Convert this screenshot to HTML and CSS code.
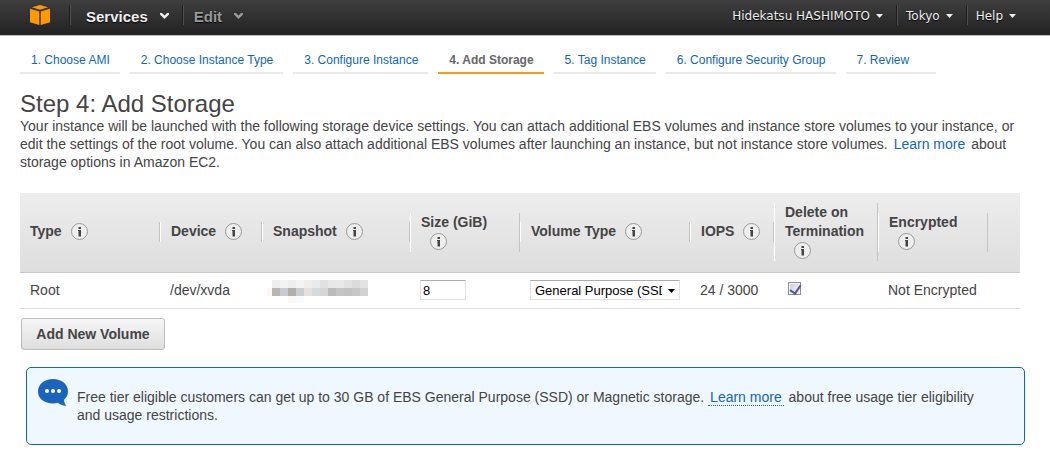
FILE: index.html
```html
<!DOCTYPE html>
<html lang="en">
<head>
    <meta charset="UTF-8">
    <meta name="viewport" content="width=device-width, initial-scale=1.0">
    <title>Step 4: Add Storage</title>
    <link rel="stylesheet" href="styles.css">
</head>
<body>

<!-- Info icon, reused by every column header -->
<svg class="sprite" aria-hidden="true">
    <symbol id="info" viewBox="0 0 17 17">
        <circle cx="8.5" cy="8.5" r="8" fill="#eeeeee" stroke="#999999"/>
        <path d="M7.500 4H10v2H7.500zM7 7h3v6.500H7.500V8H7z" fill="#444444"/>
    </symbol>
</svg>

<header class="topbar">
    <a href="#" class="logo" aria-label="Home">
        <svg width="20" height="20" viewBox="0 0 20 20">
            <path d="M2 2.300 10 0l8 2.300L10 4.800zM0 3.800l9.300 2.700V20L0 17.200zM20 3.800l-9.300 2.700V20L20 17.200z" fill="#ff9900"/>
        </svg>
    </a>
    <nav class="menu">
        <button class="menu-item">Services
            <svg width="9" height="6" viewBox="0 0 9 6"><path d="M0 0h2l2.500 2.500L7 0h2v1.500L4.500 6 0 1.500z" fill="currentColor"/></svg>
        </button>
        <button class="menu-item muted">Edit
            <svg width="9" height="6" viewBox="0 0 9 6"><path d="M0 0h2l2.500 2.500L7 0h2v1.500L4.500 6 0 1.500z" fill="currentColor"/></svg>
        </button>
    </nav>
    <nav class="account">
        <button class="account-item">Hidekatsu HASHIMOTO
            <svg width="7" height="4" viewBox="0 0 7 4"><path d="M0 0h7L3.500 4z" fill="currentColor"/></svg>
        </button>
        <button class="account-item">Tokyo
            <svg width="7" height="4" viewBox="0 0 7 4"><path d="M0 0h7L3.500 4z" fill="currentColor"/></svg>
        </button>
        <button class="account-item">Help
            <svg width="7" height="4" viewBox="0 0 7 4"><path d="M0 0h7L3.500 4z" fill="currentColor"/></svg>
        </button>
    </nav>
</header>

<nav class="steps">
    <a href="#">1. Choose AMI</a>
    <a href="#">2. Choose Instance Type</a>
    <a href="#">3. Configure Instance</a>
    <a href="#" class="active">4. Add Storage</a>
    <a href="#">5. Tag Instance</a>
    <a href="#">6. Configure Security Group</a>
    <a href="#">7. Review</a>
</nav>

<main>
    <h1>Step 4: Add Storage</h1>
    <p class="intro">Your instance will be launched with the following storage device settings. You can attach additional EBS volumes and instance store volumes to your instance, or edit the settings of the root volume. You can also attach additional EBS volumes after launching an instance, but not instance store volumes. <a href="#">Learn more</a> about storage options in Amazon EC2.</p>

    <table class="volumes">
        <colgroup>
            <col class="col-type">
            <col class="col-device">
            <col class="col-snapshot">
            <col class="col-size">
            <col class="col-volume">
            <col class="col-iops">
            <col class="col-delete">
            <col class="col-encrypted">
            <col>
        </colgroup>
        <thead>
            <tr>
                <th><div class="head">Type<svg class="info"><use href="#info"/></svg></div></th>
                <th><div class="head">Device<svg class="info"><use href="#info"/></svg></div></th>
                <th><div class="head">Snapshot<svg class="info"><use href="#info"/></svg></div></th>
                <th><div class="head" id="sizeLabel">Size (GiB)<svg class="info"><use href="#info"/></svg></div></th>
                <th><div class="head" id="volumeLabel">Volume Type<svg class="info"><use href="#info"/></svg></div></th>
                <th><div class="head">IOPS<svg class="info"><use href="#info"/></svg></div></th>
                <th><div class="head" id="deleteLabel">Delete on Termination<svg class="info"><use href="#info"/></svg></div></th>
                <th><div class="head">Encrypted<svg class="info"><use href="#info"/></svg></div></th>
                <th></th>
            </tr>
        </thead>
        <tbody>
            <tr>
                <td>Root</td>
                <td>/dev/xvda</td>
                <td>
                    <!-- snapshot id is masked -->
                    <svg class="mask" width="96" height="20" shape-rendering="crispEdges">
                        <rect x="0" width="8" height="8" fill="#f0eeed"/>
                        <rect x="8" width="8" height="8" fill="#f3f3f4"/>
                        <rect x="16" width="8" height="8" fill="#eeeeef"/>
                        <rect x="24" width="8" height="8" fill="#f2f5f5"/>
                        <rect x="32" width="8" height="8" fill="#f0edea"/>
                        <rect x="40" width="8" height="8" fill="#e8eaed"/>
                        <rect x="48" width="8" height="8" fill="#e1e1e1"/>
                        <rect x="56" width="8" height="8" fill="#e8e8e8"/>
                        <rect x="64" width="8" height="8" fill="#e9e9e9"/>
                        <rect x="72" width="8" height="8" fill="#e2e2e2"/>
                        <rect x="80" width="8" height="8" fill="#dbdbdc"/>
                        <rect x="88" width="8" height="8" fill="#e2e3e5"/>
                        <rect x="-5" y="8" width="5" height="8" fill="#fff8f0"/>
                        <rect x="0" y="8" width="8" height="8" fill="#bab5b2"/>
                        <rect x="8" y="8" width="8" height="8" fill="#c8ccd2"/>
                        <rect x="16" y="8" width="8" height="8" fill="#b3aea9"/>
                        <rect x="24" y="8" width="8" height="8" fill="#c8ced3"/>
                        <rect x="32" y="8" width="8" height="8" fill="#e7e1da"/>
                        <rect x="40" y="8" width="8" height="8" fill="#d5dade"/>
                        <rect x="48" y="8" width="8" height="8" fill="#d6d6d6"/>
                        <rect x="56" y="8" width="8" height="8" fill="#bbbbbb"/>
                        <rect x="64" y="8" width="8" height="8" fill="#c5c5c5"/>
                        <rect x="72" y="8" width="8" height="8" fill="#c1c2c3"/>
                        <rect x="80" y="8" width="8" height="8" fill="#c7c7c8"/>
                        <rect x="88" y="8" width="8" height="8" fill="#d1d2d4"/>
                        <rect x="16" y="16" width="8" height="7" fill="#f9f8f7"/>
                        <rect x="24" y="16" width="8" height="7" fill="#f8fcff"/>
                    </svg>
                </td>
                <td><input type="text" class="size" value="8" aria-labelledby="sizeLabel"></td>
                <td>
                    <div class="select">
                        <select aria-labelledby="volumeLabel">
                            <option>General Purpose (SSD)</option>
                            <option>Provisioned IOPS (SSD)</option>
                            <option>Magnetic</option>
                        </select>
                        <svg width="7" height="4" viewBox="0 0 7 4"><path d="M0 0h7L3.500 4z"/></svg>
                    </div>
                </td>
                <td>24 / 3000</td>
                <td><input type="checkbox" class="tick" checked aria-labelledby="deleteLabel"></td>
                <td>Not Encrypted</td>
                <td></td>
            </tr>
        </tbody>
    </table>

    <button class="add">Add New Volume</button>

    <div class="notice">
        <svg class="bubble" width="30" height="27" viewBox="0 0 30 27">
            <path d="M15 0C23.500 0 30 5 30 12.500c0 3.500-1.500 6.200-4 8.300.2 2.500 1 4.200 2 6.200-3.500-.6-6.300-1.800-8.500-3.200-1.400.4-2.900.6-4.500.6C6.500 24.400 0 20 0 12.500 0 5 6.500 0 15 0z" fill="#1a64be"/>
            <circle cx="9" cy="12" r="2" fill="#ffffff"/>
            <circle cx="15" cy="12" r="2" fill="#ffffff"/>
            <circle cx="21" cy="12" r="2" fill="#ffffff"/>
        </svg>
        <p>Free tier eligible customers can get up to 30 GB of EBS General Purpose (SSD) or Magnetic storage. <a href="#">Learn more</a> about free usage tier eligibility and usage restrictions.</p>
    </div>
</main>

</body>
</html>
```
FILE: styles.css
```css
* {
    box-sizing: border-box;
}

body {
    margin: 0;
    font-family: "Liberation Sans", Arial, sans-serif;
    font-size: 14px;
    line-height: 18px;
    color: #444;
    background-color: #fff;
}

a {
    color: #1166bb;
    text-decoration: none;
}

button {
    font-family: inherit;
    cursor: pointer;
}

.sprite {
    display: none;
}

/* Top bar */
.topbar {
    display: flex;
    align-items: flex-start;
    height: 36px;
    padding: 5px 21px 0 30px;
    background: linear-gradient(#3e3e3e, #222);
    border-bottom: 1px solid #bbb;
}

.logo {
    display: block;
    width: 39px;
    height: 20px;
}

.menu,
.account {
    display: flex;
}

.account {
    margin-left: auto;
}

.menu-item,
.account-item {
    display: flex;
    align-items: center;
    height: 20px;
    border: 0;
    border-left: 1px solid #1c1c1c;
    box-shadow: inset 1px 0 0 #505050;
    background: none;
    color: #eee;
    white-space: nowrap;
    text-shadow: 0 1px 1px #000;
}

.menu-item {
    gap: 12px;
    padding: 2px 13px 0 16px;
    font-size: 15px;
    font-weight: bold;
}

.menu-item.muted {
    padding: 2px 12px 0 11px;
    color: #999;
}

.account-item {
    gap: 6px;
    padding: 2px 13px 0 9px;
    font-family: "DejaVu Sans", Verdana, sans-serif;
    font-size: 12px;
}

.account-item:first-child {
    border-left: 0;
    box-shadow: none;
}

/* Wizard steps */
.steps {
    display: flex;
    gap: 10px;
    padding: 15px 20px 0;
    font-size: 12px;
}

.steps a {
    min-width: 90px;
    height: 23px;
    padding: 0 10px 0 11px;
    border-bottom: 2px solid #eaeaea;
    white-space: nowrap;
}

.steps a.active {
    border-color: #ff9914;
    color: #666;
    font-weight: bold;
}

main {
    padding: 16px 20px 5px;
}

h1 {
    margin: 0;
    font-size: 24px;
    line-height: 27px;
    font-weight: normal;
}

.intro {
    margin: 0 0 22px;
}

.intro a {
    margin: 0 2px;
}

/* Volumes table */
.volumes {
    width: calc(100% - 10px);
    border-collapse: collapse;
    table-layout: fixed;
}

.col-type { width: 14%; }
.col-device { width: 10.2%; }
.col-snapshot { width: 14.8%; }
.col-size { width: 11%; }
.col-volume { width: 17%; }
.col-iops { width: 8.4%; }
.col-delete { width: 10.4%; }
.col-encrypted { width: 11%; }

.volumes thead {
    background: linear-gradient(#ededed, #dedede);
}

.volumes th {
    height: 79px;
    padding: 0;
    border-bottom: 1px solid #c8c8c8;
    text-align: left;
    vertical-align: middle;
}

.head {
    padding: 0 8px 0 10px;
    border-left: 1px solid #fff;
    border-right: 1px solid #c4c4c4;
    line-height: 19px;
}

th:first-child .head {
    border-left: 0;
}

.info {
    width: 17px;
    height: 17px;
    margin: 0 0 2px 9px;
    overflow: visible;
    vertical-align: middle;
}

.volumes td {
    height: 36px;
    padding: 0 10px;
    border-bottom: 1px solid #ddd;
    white-space: nowrap;
}

.mask {
    display: block;
    overflow: visible;
}

.size {
    display: block;
    width: 46px;
    height: 20px;
    padding: 0 2px;
    border: 1px solid #dde1ec;
    border-top-color: #abadb3;
    font-family: inherit;
    font-size: 13px;
}

.select {
    position: relative;
    width: 150px;
}

.select select {
    display: block;
    width: 100%;
    height: 20px;
    padding: 0 17px 0 4px;
    border: 1px solid #dde1ec;
    border-top-color: #abadb3;
    border-radius: 0;
    appearance: none;
    background: #fff;
    color: #000;
    font-family: inherit;
    font-size: 13px;
}

.select svg {
    position: absolute;
    top: 9px;
    right: 5px;
    pointer-events: none;
}

.tick {
    display: block;
    width: 13px;
    height: 13px;
    margin: 0 4px 4px;
    border: 1px solid #8e8f8f;
    appearance: none;
    background: linear-gradient(135deg, #cbcfd5, #f6f6f6);
    box-shadow: inset 0 0 0 1px #f4f4f4;
}

.tick:checked::after {
    content: "";
    display: block;
    width: 5px;
    height: 9px;
    margin: 0 0 0 3px;
    border: solid #4a5f97;
    border-width: 0 2px 2px 0;
    transform: rotate(35deg);
}

.add {
    display: block;
    min-width: 144px;
    height: 32px;
    margin: 9px 1px 17px;
    padding: 0 13px;
    border: 1px solid #bbb;
    border-radius: 3px;
    background: linear-gradient(#f6f6f6, #dedede);
    color: #444;
    font-size: 14px;
    font-weight: bold;
}

/* Free tier notice */
.notice {
    display: flex;
    align-items: flex-start;
    gap: 9px;
    min-height: 78px;
    margin: 0 5px 0 6px;
    padding: 11px 30px 20px 11px;
    border: 1px solid #1166bb;
    border-radius: 5px;
    background-color: #f0f8ff;
}

.bubble {
    flex: none;
}

.notice p {
    margin: 9px 0 0;
}

.notice a {
    margin-right: 1px;
    padding: 0 2px;
    border-bottom: 1px dotted #1166bb;
}
```
